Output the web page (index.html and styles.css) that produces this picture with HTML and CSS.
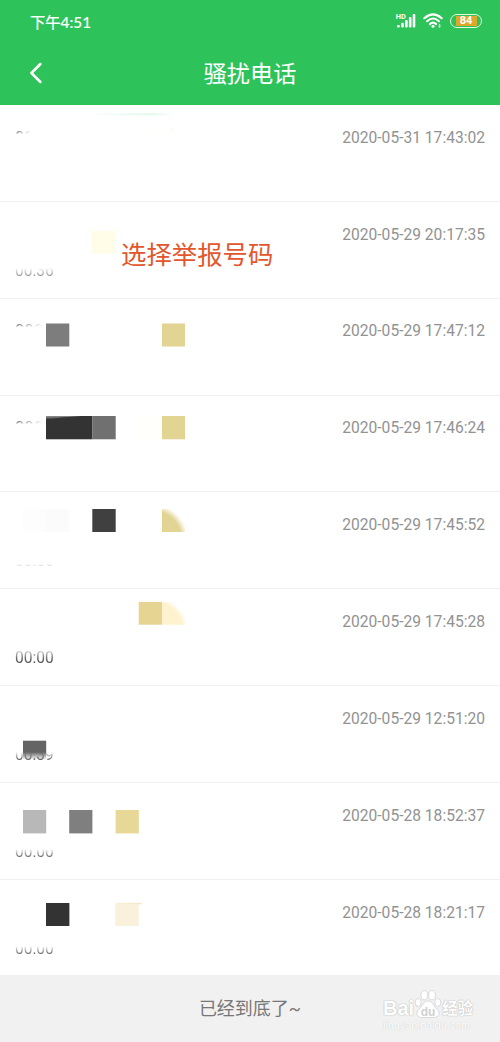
FILE: index.html
```html
<!DOCTYPE html>
<html lang="zh-CN">
<head>
    <meta charset="UTF-8">
    <meta name="viewport" content="width=device-width, initial-scale=1.0">
    <title>骚扰电话</title>
    <link rel="stylesheet" href="styles.css">
</head>
<body>
    <header class="header">
        <div class="status-bar">
            <span class="time">下午4:51</span>
            <div class="status-icons">
                <svg class="signal" width="20" height="16" viewBox="0 0 20 16">
                    <text x="-0.3" y="6" class="hd">HD</text>
                    <g fill="#fff">
                        <rect x="1" y="12" width="2.8" height="2.4" rx="1"/>
                        <rect x="5.2" y="9.8" width="2.6" height="4.6" rx="1"/>
                        <rect x="9.1" y="7" width="2.6" height="7.4" rx="1"/>
                        <rect x="12.9" y="4" width="2.6" height="10.4" rx="1"/>
                        <rect x="16.7" y="1" width="2.6" height="13.4" rx="1"/>
                    </g>
                </svg>
                <svg class="wifi" width="20" height="16" viewBox="0 0 20 16">
                    <g fill="none" stroke="#fff" stroke-width="2.1" stroke-linecap="round">
                        <path d="M1.3 5.2Q10 -2.6 18.7 5.2"/>
                        <path d="M4.1 8.2Q10 2.8 15.9 8.2"/>
                        <path d="M6.9 11.1Q10 8.3 13.1 11.1"/>
                    </g>
                    <circle cx="10" cy="13.3" r="1.5" fill="#fff"/>
                    <path d="M16.6 10.8l1.2 1.6h-2.4zM16.6 14.9l1.2-1.6h-2.4z" fill="#fff"/>
                </svg>
                <div class="battery"><span>84</span></div>
            </div>
        </div>
        <div class="title-bar">
            <svg class="back" width="14" height="22" viewBox="0 0 14 22">
                <path d="M11.4 2L2.4 11L11.4 20" fill="none" stroke="#fff" stroke-width="2.5" stroke-linecap="round" stroke-linejoin="round"/>
            </svg>
            <h1>骚扰电话</h1>
        </div>
    </header>

    <main class="list">
        <div class="row"><span class="number short">00</span><span class="date">2020-05-31 17:43:02</span></div>
        <div class="row"><span class="duration half">00:36</span><span class="date">2020-05-29 20:17:35</span></div>
        <div class="row"><span class="number">000</span><span class="date">2020-05-29 17:47:12</span></div>
        <div class="row"><span class="number">000</span><span class="date">2020-05-29 17:46:24</span></div>
        <div class="row"><span class="duration faint">00:00</span><span class="date">2020-05-29 17:45:52</span></div>
        <div class="row"><span class="duration full">00:00</span><span class="date">2020-05-29 17:45:28</span></div>
        <div class="row"><span class="duration dark">00:39</span><span class="date">2020-05-29 12:51:20</span></div>
        <div class="row"><span class="duration">00:00</span><span class="date">2020-05-28 18:52:37</span></div>
        <div class="row"><span class="duration">00:00</span><span class="date">2020-05-28 18:21:17</span></div>

        <!-- mosaic over the phone numbers -->
        <svg class="mosaic" width="300" height="871" viewBox="0 105 300 871">
            <defs>
                <radialGradient id="corner" gradientUnits="userSpaceOnUse" cx="152" cy="540" r="36">
                    <stop offset="0.82" stop-color="#e2d493"/>
                    <stop offset="1" stop-color="#e2d493" stop-opacity="0"/>
                </radialGradient>
                <radialGradient id="corner2" gradientUnits="userSpaceOnUse" cx="152" cy="633" r="37">
                    <stop offset="0.86" stop-color="#fff2cf"/>
                    <stop offset="1" stop-color="#fff2cf" stop-opacity="0"/>
                </radialGradient>
                <linearGradient id="fade" x1="0" y1="0" x2="0" y2="1">
                    <stop offset="0.6" stop-color="#646464"/>
                    <stop offset="1" stop-color="#646464" stop-opacity="0"/>
                </linearGradient>
                <linearGradient id="streak">
                    <stop offset="0" stop-color="#e6f9ee" stop-opacity="0"/>
                    <stop offset="0.75" stop-color="#e6f9ee"/>
                    <stop offset="1" stop-color="#e6f9ee" stop-opacity="0"/>
                </linearGradient>
                <linearGradient id="shine" x1="0" y1="0" x2="0.15" y2="1">
                    <stop offset="0" stop-color="#999"/>
                    <stop offset="0.9" stop-color="#333"/>
                </linearGradient>
            </defs>
            <rect x="85" y="113" width="90" height="2.5" fill="url(#streak)"/>
            <rect x="142" y="127" width="30" height="9" fill="#fffffd"/>
            <rect x="171" y="128" width="2" height="5" fill="#fffdf2"/>
            <rect x="92" y="231" width="23.5" height="22.5" fill="#fffde8"/>
            <rect x="46" y="323.5" width="23.3" height="23" fill="#7d7d7d"/>
            <rect x="162" y="323.5" width="23" height="23" fill="#e2d493"/>
            <rect x="46" y="416" width="46.5" height="23.3" fill="#333"/>
            <path d="M46 416h36Q60 417 46 420z" fill="url(#shine)"/>
            <rect x="92.5" y="416" width="23.2" height="23.3" fill="#707070"/>
            <rect x="139" y="416" width="23" height="23" fill="#fffffc"/>
            <rect x="162" y="416" width="23" height="23.3" fill="#e2d493"/>
            <rect x="23" y="509" width="23" height="23" fill="#fdfdfd"/>
            <rect x="46" y="509" width="23" height="23" fill="#fbfbfb"/>
            <rect x="92.3" y="509" width="23.4" height="23" fill="#404040"/>
            <rect x="162" y="509" width="23" height="23" fill="url(#corner)"/>
            <rect x="138.7" y="602" width="23.3" height="22.7" fill="#e6d592"/>
            <rect x="162" y="602" width="23" height="22.7" fill="url(#corner2)"/>
            <rect x="23" y="740.7" width="23.2" height="19" fill="url(#fade)"/>
            <rect x="23" y="810" width="23.2" height="23.4" fill="#b8b8b8"/>
            <rect x="69.2" y="810" width="23.2" height="23.4" fill="#7f7f7f"/>
            <rect x="115.6" y="810" width="23.2" height="23.4" fill="#e8d897"/>
            <rect x="46" y="903" width="23.4" height="23" fill="#333"/>
            <rect x="115.3" y="902.7" width="23.5" height="23.3" fill="#faf1dc"/>
            <path d="M116 903h26v1.2h-4z" fill="#f4e6c8"/>
        </svg>
        <div class="tip">选择举报号码</div>
    </main>

    <footer class="footer">
        <p>已经到底了~</p>
        <div class="watermark">
            <div class="brand">
                <span class="bai">Bai</span>
                <svg width="28" height="30" viewBox="0 0 28 30">
                    <g fill="#fff" stroke="#d6d6d6" stroke-width="0.9">
                        <ellipse cx="4.2" cy="13.5" rx="3" ry="4"/>
                        <ellipse cx="10.3" cy="6.2" rx="3.4" ry="4.6"/>
                        <ellipse cx="18" cy="6.2" rx="3.4" ry="4.6"/>
                        <ellipse cx="23.8" cy="13.5" rx="3" ry="4"/>
                        <path d="M14 12C9 12 9 17 5 20C1 24 3 28.5 8 28.5H20C25 28.5 27 24 23 20C19 17 19 12 14 12z"/>
                    </g>
                    <text x="14" y="26.5" text-anchor="middle" class="du">du</text>
                </svg>
                <span class="jingyan">经验</span>
            </div>
            <div class="site">jingyan.baidu.com</div>
        </div>
    </footer>
</body>
</html>
```
FILE: styles.css
```css
* {
    box-sizing: border-box;
}

body {
    margin: 0;
    width: 500px;
    height: 1042px;
    display: flex;
    flex-direction: column;
    overflow: hidden;
    background: #fff;
    font-family: Roboto, "Noto Sans CJK SC", sans-serif;
}

.header {
    height: 105px;
    background: #2ec35a;
    color: #fff;
}

.status-bar {
    height: 41px;
    padding: 0 18px 0 30px;
    display: flex;
    align-items: center;
    justify-content: space-between;
}

.time {
    font-family: Lato, "Noto Sans CJK SC", sans-serif;
    font-size: 15.3px;
    font-weight: 400;
    -webkit-text-stroke: 0.2px #fff;
}

.status-icons {
    display: flex;
    align-items: center;
    gap: 7px;
}

.signal {
    overflow: visible;
}

.hd {
    font: bold 7.4px Roboto, sans-serif;
    fill: #fff;
}

.battery {
    width: 32px;
    height: 14px;
    padding: 1px 5px;
    border: 1.5px solid #e9f8dd;
    border-radius: 7px;
    background: linear-gradient(#dfa62c, #dfa62c) 5px 1px / 21px 10px no-repeat;
    display: flex;
    align-items: center;
    justify-content: center;
    font-size: 11px;
    font-weight: bold;
}

.title-bar {
    height: 64px;
    display: flex;
    align-items: center;
    padding-left: 29px;
}

.title-bar h1 {
    flex: 1;
    margin: 0 43px 2px 0;
    text-align: center;
    font-size: 23.2px;
    font-weight: 400;
}

.list {
    height: 871px;
    position: relative;
    display: grid;
    grid-template-rows: repeat(8, 96.85px) 1fr;
}

.row {
    padding: 22.8px 15px 0;
    display: flex;
    align-items: flex-start;
    border-bottom: 1px solid #f1f1f1;
    font-size: 15.6px;
    line-height: 20px;
}

.row:last-child {
    border-bottom: none;
}

.date {
    margin-left: auto;
    color: #929292;
}

/* only the top edge of the digits is left */
.number {
    font-size: 16.5px;
    letter-spacing: 0.3px;
    color: #777;
    -webkit-mask-image: linear-gradient(#000 4px, transparent 6.5px), linear-gradient(90deg, #000, transparent);
    -webkit-mask-composite: source-in;
    mask-composite: intersect;
}

.number.short {
    -webkit-mask-image: linear-gradient(#000 4px, transparent 6.5px), linear-gradient(90deg, #000, transparent 85%);
}

/* only the bottom edge of the digits is left */
.duration {
    margin-top: 36px;
    color: #555;
    -webkit-mask-image: linear-gradient(transparent 7px, #000 16px);
    mask-image: linear-gradient(transparent 7px, #000 16px);
}

.duration.half {
    color: #888;
}

.duration.faint {
    color: #999;
    -webkit-mask-image: linear-gradient(transparent 13px, #000 18px);
    mask-image: linear-gradient(transparent 13px, #000 18px);
}

.duration.full {
    -webkit-mask-image: linear-gradient(transparent, #000 12px);
    mask-image: linear-gradient(transparent, #000 12px);
}

.duration.dark {
    position: relative;
    z-index: 1;
    color: #444;
}

.mosaic {
    position: absolute;
    top: 0;
    left: 0;
}

.tip {
    position: absolute;
    top: 132px;
    left: 121px;
    font-size: 25.4px;
    line-height: 36px;
    color: #e2572c;
}

.footer {
    height: 66px;
    position: relative;
    background: #f1f1f1;
}

.footer p {
    margin: 0;
    text-align: center;
    font-size: 18px;
    line-height: 66px;
    color: #777;
}

.watermark {
    position: absolute;
    left: 383px;
    top: 11px;
    width: 92px;
    color: #fff;
}

.brand {
    height: 32px;
    display: flex;
    align-items: flex-end;
    text-shadow: 0 0 1px #bbb, 0 0 1px #bbb, 0 0 2px #ddd;
}

.bai {
    font: bold 20px/22px "Liberation Sans", sans-serif;
}

.du {
    font: bold 12px "Liberation Sans", sans-serif;
    fill: #d0d0d0;
    text-shadow: none;
}

.jingyan {
    font-size: 15.5px;
    font-weight: bold;
    line-height: 20px;
}

.site {
    font: 10.8px/12px "Liberation Sans", sans-serif;
    text-shadow: 0 0 1px #ccc, 0 0 1px #ddd;
}
```
